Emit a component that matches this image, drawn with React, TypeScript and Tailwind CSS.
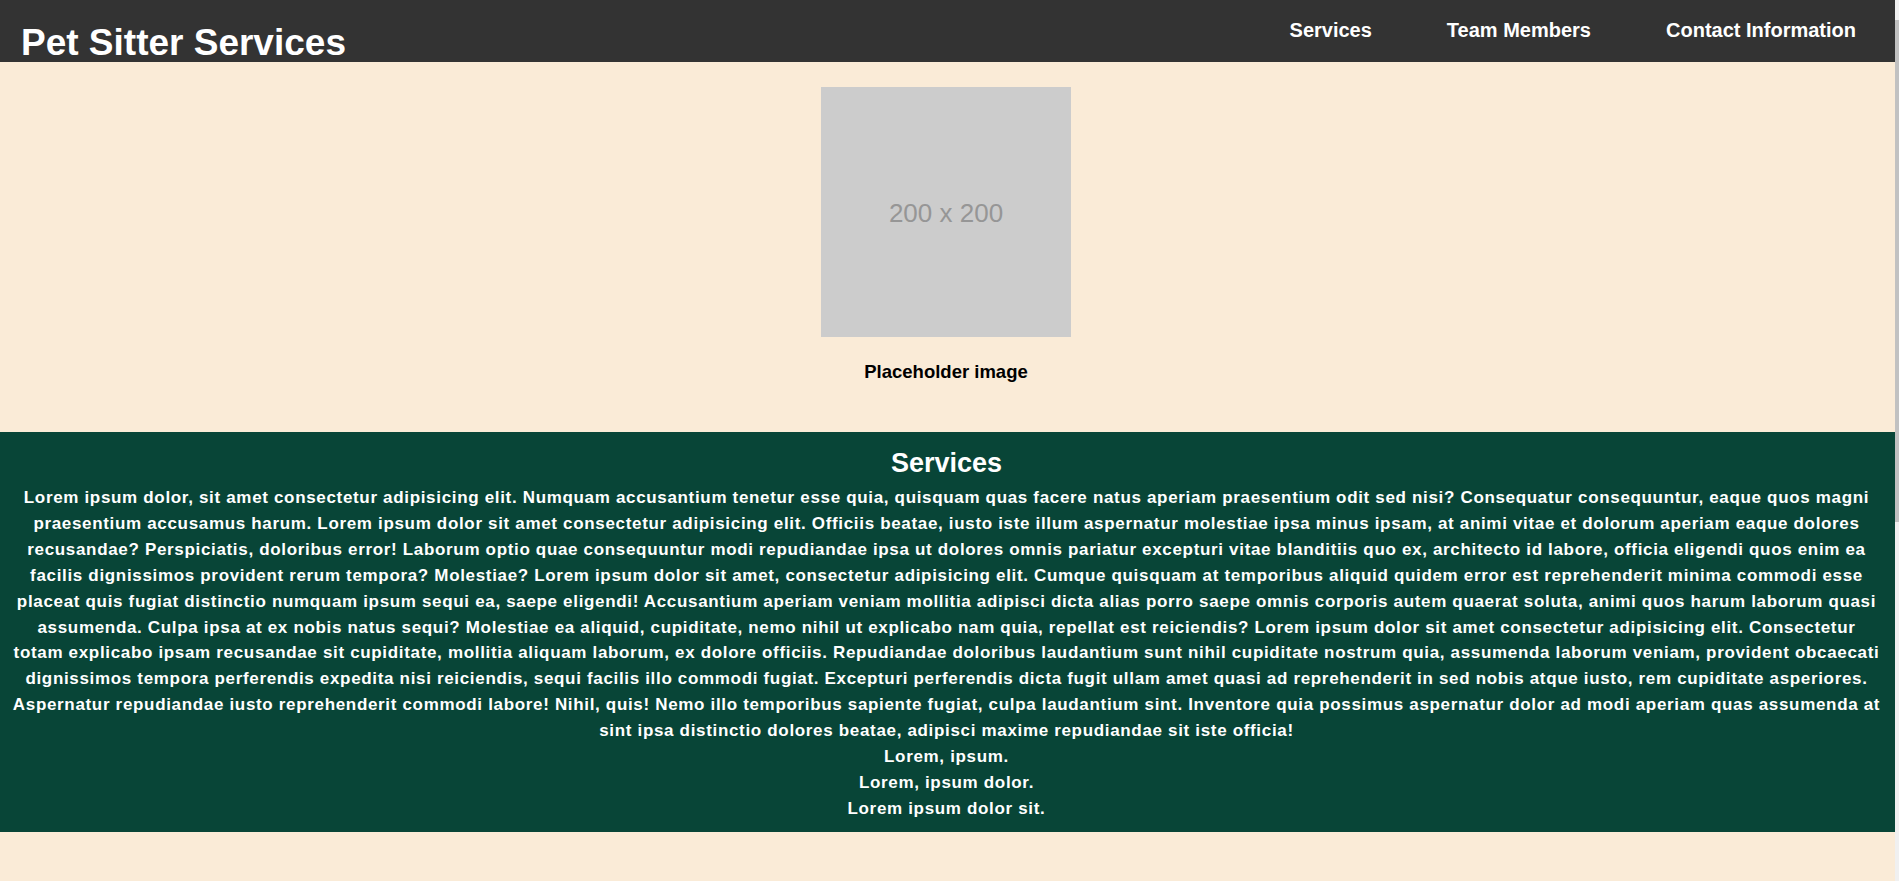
import React from 'react';

const NAV = ['Services', 'Team Members', 'Contact Information'];

// Broken the way the original page wraps it at this width.
const SERVICES_LINES = [
  'Lorem ipsum dolor, sit amet consectetur adipisicing elit. Numquam accusantium tenetur esse quia, quisquam quas facere natus aperiam praesentium odit sed nisi? Consequatur consequuntur, eaque quos magni',
  'praesentium accusamus harum. Lorem ipsum dolor sit amet consectetur adipisicing elit. Officiis beatae, iusto iste illum aspernatur molestiae ipsa minus ipsam, at animi vitae et dolorum aperiam eaque dolores',
  'recusandae? Perspiciatis, doloribus error! Laborum optio quae consequuntur modi repudiandae ipsa ut dolores omnis pariatur excepturi vitae blanditiis quo ex, architecto id labore, officia eligendi quos enim ea',
  'facilis dignissimos provident rerum tempora? Molestiae? Lorem ipsum dolor sit amet, consectetur adipisicing elit. Cumque quisquam at temporibus aliquid quidem error est reprehenderit minima commodi esse',
  'placeat quis fugiat distinctio numquam ipsum sequi ea, saepe eligendi! Accusantium aperiam veniam mollitia adipisci dicta alias porro saepe omnis corporis autem quaerat soluta, animi quos harum laborum quasi',
  'assumenda. Culpa ipsa at ex nobis natus sequi? Molestiae ea aliquid, cupiditate, nemo nihil ut explicabo nam quia, repellat est reiciendis? Lorem ipsum dolor sit amet consectetur adipisicing elit. Consectetur',
  'totam explicabo ipsam recusandae sit cupiditate, mollitia aliquam laborum, ex dolore officiis. Repudiandae doloribus laudantium sunt nihil cupiditate nostrum quia, assumenda laborum veniam, provident obcaecati',
  'dignissimos tempora perferendis expedita nisi reiciendis, sequi facilis illo commodi fugiat. Excepturi perferendis dicta fugit ullam amet quasi ad reprehenderit in sed nobis atque iusto, rem cupiditate asperiores.',
  'Aspernatur repudiandae iusto reprehenderit commodi labore! Nihil, quis! Nemo illo temporibus sapiente fugiat, culpa laudantium sint. Inventore quia possimus aspernatur dolor ad modi aperiam quas assumenda at',
  'sint ipsa distinctio dolores beatae, adipisci maxime repudiandae sit iste officia!',
];

export default function App() {
  return (
    <div className="flex h-screen overflow-hidden bg-[#faebd7] font-['Liberation_Sans',Arial,sans-serif] font-bold">
      <div className="min-w-0 flex-1">
        {/* Header */}
        <header className="flex h-[62px] items-start justify-between bg-[#333333] pl-[21px] pr-[39px] text-white">
          <h1 className="mt-[24px] text-[37px] leading-none">Pet Sitter Services</h1>
          <nav className="mt-[20px] flex gap-[75px] text-[20px] leading-none">
            {NAV.map((item) => (
              <a key={item} href="#" className="hover:underline">
                {item}
              </a>
            ))}
          </nav>
        </header>

        {/* Hero image */}
        <figure className="flex flex-col items-center pt-[25px] pr-[3px] pb-[50px]">
          <div className="flex h-[250px] w-[250px] items-center justify-center bg-[#cccccc] pt-[3px] text-[26px] font-normal text-[#969696]">
            200 x 200
          </div>
          <figcaption className="mt-[24px] text-[18.5px] leading-[1.15] text-black">Placeholder image</figcaption>
        </figure>

        {/* Services */}
        <section className="bg-[#084537] pt-[16px] pr-[12px] pb-[11px] pl-[10px] text-center text-white">
          <h2 className="text-[27px] leading-[30px]">Services</h2>
          <div className="mt-[7px] text-[17px] leading-[25.86px] tracking-[0.67px]">
            <p>
              {SERVICES_LINES.map((line, i) => (
                <React.Fragment key={i}>
                  {line}
                  {i < SERVICES_LINES.length - 1 && <br />}
                </React.Fragment>
              ))}
            </p>
            <p>Lorem, ipsum.</p>
            <p>Lorem, ipsum dolor.</p>
            <p>Lorem ipsum dolor sit.</p>
          </div>
        </section>
      </div>

      {/* Scrollbar */}
      <div className="flex w-[4px] flex-col bg-[#f0f0f0] pt-[20px]">
        <div className="h-[502px] bg-[#c1c1c1]" />
      </div>
    </div>
  );
}
